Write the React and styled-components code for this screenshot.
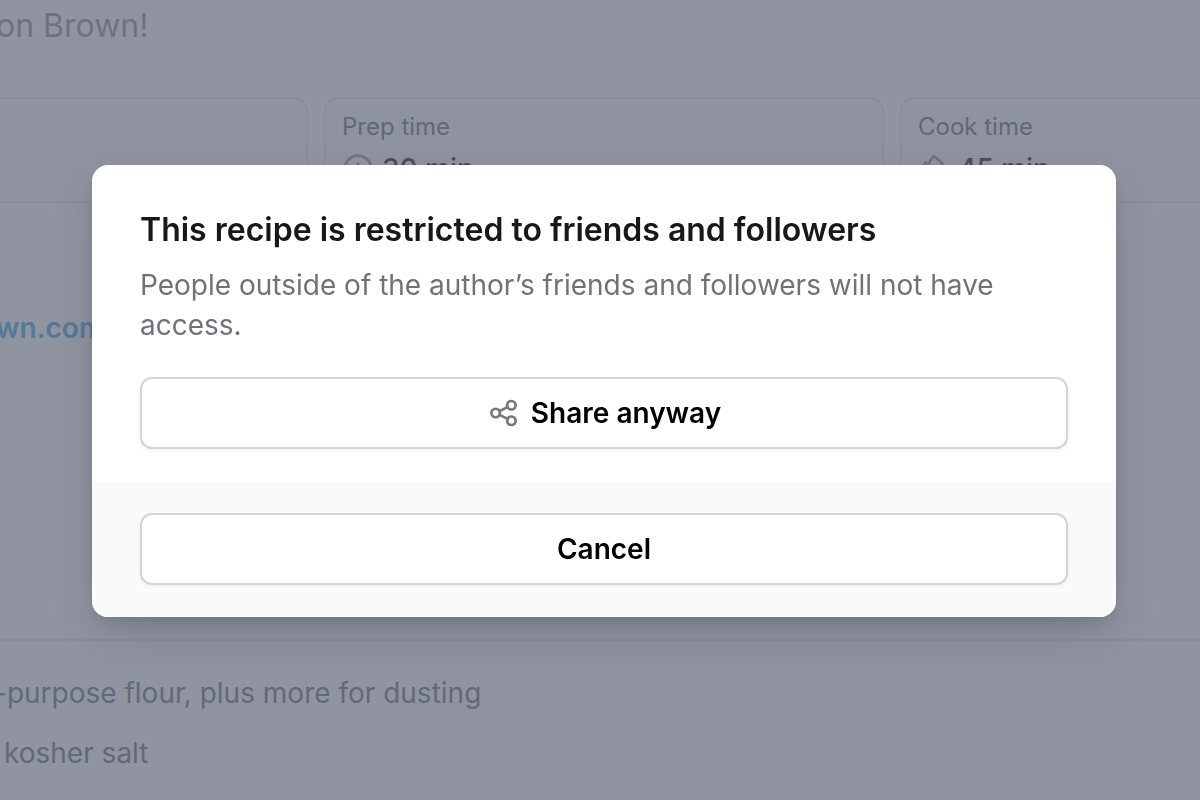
import React from 'react';
import styled, { createGlobalStyle } from 'styled-components';

const Global = createGlobalStyle`
  * { box-sizing: border-box; }
  body {
    margin: 0;
    background: #9094a0;
    font-family: Inter, "Liberation Sans", sans-serif;
    font-size: 28px;
    line-height: 40px;
    color: #626976;
  }
  h2, p, ul { margin: 0; padding: 0; }
`;

const Page = styled.main`
  min-height: 100vh;
  overflow: hidden;
  white-space: nowrap;
`;

const Byline = styled.p`
  margin-left: -4px;
  padding-top: 2px;
  font-size: 32px;
  line-height: 48px;
  color: #6e727f;
`;

const Stats = styled.section`
  display: grid;
  grid-template-columns: repeat(3, 1fr);
  gap: 16px;
  width: calc(100% + 512px);
  margin: 47px 0 0 -252px;
`;

const Card = styled.div`
  min-height: 106px;
  padding: 12px 16px;
  border: 2px solid #8a8e9b;
  border-radius: 14px;
  background: #8f939f;
`;

const Label = styled.p`
  font-size: 24px;
  line-height: 32px;
  color: #606775;
`;

const Value = styled.p`
  display: flex;
  align-items: center;
  gap: 8px;
  margin-top: 6px;
  font-weight: 500;
  color: #4a4e59;
  svg { color: #6f7482; }
`;

const Source = styled.a`
  display: block;
  width: max-content;
  margin: 105px 0 0 -4px;
  font-weight: 600;
  color: #557899;
  text-decoration: none;
`;

const Ingredients = styled.ul`
  display: grid;
  gap: 20px;
  margin-top: 291px;
  padding-top: 32px;
  border-top: 2px solid #898d9a;
  list-style: none;
`;

const Ingredient = styled.li`
  margin-left: ${(p) => (p.$inset ? '4px' : '-6px')};
`;

const Overlay = styled.div`
  position: fixed;
  inset: 0;
  display: flex;
  align-items: center;
  justify-content: center;
  padding: 0 84px 18px 92px;
`;

const Dialog = styled.div`
  width: 100%;
  max-width: 1024px;
  border-radius: 16px;
  overflow: hidden;
  background: #fff;
  box-shadow: 0 20px 48px -8px rgba(40, 44, 56, 0.24), 0 8px 20px -8px rgba(40, 44, 56, 0.2);
`;

const Body = styled.div`
  padding: 41px 48px 32px;
`;

const Title = styled.h2`
  font-size: 32px;
  line-height: 48px;
  font-weight: 600;
  color: #18181b;
`;

const Text = styled.p`
  margin: 11px 0 32px;
  color: #71717a;
`;

const Footer = styled.div`
  padding: 32px 48px;
  background: #fafafa;
`;

const Button = styled.button`
  display: flex;
  align-items: center;
  justify-content: center;
  gap: 12px;
  width: 100%;
  height: 72px;
  padding: 0 24px;
  border: 2px solid #d4d4d8;
  border-radius: 12px;
  background: #fff;
  box-shadow: 0 2px 4px rgba(0, 0, 0, 0.05);
  font: inherit;
  font-weight: 600;
  color: #000;
  cursor: pointer;
  svg { color: #77777f; }
`;

function Icon({ size, children }) {
  return (
    <svg width={size} height={size} viewBox="0 0 24 24" fill="none" stroke="currentColor"
      strokeWidth="2" strokeLinecap="round" strokeLinejoin="round" aria-hidden="true">
      {children}
    </svg>
  );
}

export default function App() {
  return (
    <>
      <Global />
      <Page>
        <Byline>on Brown!</Byline>
        <Stats>
          <Card />
          <Card>
            <Label>Prep time</Label>
            <Value>
              <Icon size={32}><circle cx="12" cy="12" r="10" /><path d="M12 8v4l3 3" /></Icon>
              30 min
            </Value>
          </Card>
          <Card>
            <Label>Cook time</Label>
            <Value>
              <Icon size={32}>
                <path d="M11.700 2.300C10 4.200 8.600 6.400 7.800 8.900L5.700 7C3.700 9 2.500 11.500 2.500 14a9 8 0 0 0 18 0C20.500 9.500 16.500 5.300 11.700 2.300z" />
              </Icon>
              45 min
            </Value>
          </Card>
        </Stats>
        <Source href="#source">wn.com</Source>
        <Ingredients>
          <Ingredient>-purpose flour, plus more for dusting</Ingredient>
          <Ingredient $inset>kosher salt</Ingredient>
        </Ingredients>
      </Page>
      <Overlay>
        <Dialog role="dialog" aria-modal="true" aria-labelledby="dialog-title">
          <Body>
            <Title id="dialog-title">This recipe is restricted to friends and followers</Title>
            <Text>People outside of the author’s friends and followers will not have access.</Text>
            <Button type="button">
              <Icon size={32}>
                <circle cx="6.500" cy="12" r="3.200" /><circle cx="18.300" cy="6.200" r="3.200" /><circle cx="18.300" cy="17.800" r="3.200" />
                <path d="M9.400 10.600l6-3M9.400 13.400l6 3" />
              </Icon>
              Share anyway
            </Button>
          </Body>
          <Footer>
            <Button type="button">Cancel</Button>
          </Footer>
        </Dialog>
      </Overlay>
    </>
  );
}
